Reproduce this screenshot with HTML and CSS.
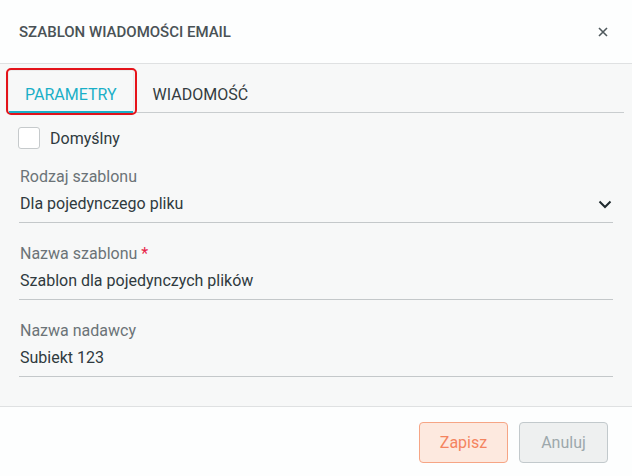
FILE: index.html
```html
<!DOCTYPE html>
<html lang="pl">
<head>
  <meta charset="UTF-8" />
  <title>Szablon wiadomości email</title>
  <meta name="viewport" content="width=device-width, initial-scale=1" />
  <link rel="stylesheet" href="styles.css">
</head>
<body>
  <div class="dialog">
    <div class="dialog-header">
      <h2 class="dialog-title">Szablon wiadomości email</h2>
      <button class="close" title="Zamknij">
        <svg width="10" height="10" viewBox="0 0 10 10"><path d="M1 1 L9 9 M9 1 L1 9" stroke="#50595d" stroke-width="1.6" fill="none"/></svg>
      </button>
    </div>

    <div class="dialog-body">
      <div class="tabs">
        <span class="highlight"><span class="tab active">Parametry</span></span>
        <span class="tab">Wiadomość</span>
      </div>

      <div class="fields">
        <label class="check">
          <span class="box"></span>
          Domyślny
        </label>

        <div class="field">
          <div class="field-label">Rodzaj szablonu</div>
          <div class="field-value select">
            <span>Dla pojedynczego pliku</span>
            <svg width="14" height="9" viewBox="0 0 14 9"><path d="M1.5 1.5 L7 7 L12.5 1.5" stroke="#1f2a2e" stroke-width="2" fill="none"/></svg>
          </div>
        </div>

        <div class="field">
          <div class="field-label">Nazwa szablonu<span class="req">*</span></div>
          <div class="field-value">Szablon dla pojedynczych plików</div>
        </div>

        <div class="field">
          <div class="field-label">Nazwa nadawcy</div>
          <div class="field-value">Subiekt 123</div>
        </div>
      </div>
    </div>

    <div class="dialog-footer">
      <button class="btn btn-save">Zapisz</button>
      <button class="btn btn-cancel">Anuluj</button>
    </div>
  </div>
</body>
</html>
```

FILE: styles.css
```css
body { margin: 0; font-family: Roboto, "Liberation Sans", sans-serif; background: #fdfefe; color: #2f3a3e; }
.dialog { width: 632px; height: 476px; display: flex; flex-direction: column; }

.dialog-header {
  height: 63px; padding: 0 21px 0 19px; display: flex; align-items: center; justify-content: space-between;
  border-bottom: 1px solid #dfe1e2; background: #fdfefe;
}
.dialog-title { margin: 0; font-size: 15px; font-weight: 500; text-transform: uppercase; color: #4a5256; }
.close { border: none; background: none; padding: 0; width: 16px; height: 16px; display: flex; align-items: center; justify-content: center; cursor: pointer; }

.dialog-body { flex: 1; background: #f7f8f8; border-bottom: 1px solid #dfe1e2; }

.tabs { margin: 4px 8px 0 8px; display: flex; align-items: flex-end; border-bottom: 1px solid #c9cdcf; }
.highlight { border: 2px solid #e8141b; border-radius: 5px; padding: 1px 2px 0 1px; margin: 0 0 -3px -2px; display: flex; }
.tab {
  height: 42px; padding: 6px 16px 0 16px; box-sizing: border-box; display: flex; align-items: center; font-size: 16px;
  text-transform: uppercase; color: #333c40; border-bottom: 2px solid transparent; margin-bottom: -1px;
}
.tab.active { color: #1aafc7; border-bottom-color: #1aafc7; box-shadow: 0 0 4px rgba(0,0,0,0.12); margin-bottom: 0; }

.fields { padding: 14px 19px 0 19px; }
.check { display: flex; align-items: center; gap: 10px; font-size: 16px; color: #2f3a3e; margin-left: -1px; }
.box { width: 20px; height: 20px; border: 1px solid #c6cacc; border-radius: 3px; background: #fff; }

.field { border-bottom: 1px solid #c4c8ca; padding-bottom: 8px; margin-top: 18px; }
.field + .field { margin-top: 21px; }
.field-label { font-size: 16px; line-height: 20px; color: #6b7377; padding-left: 1px; }
.req { color: #e8254a; margin-left: 4px; }
.field-value { font-size: 16px; line-height: 20px; margin-top: 7px; color: #2f3a3e; padding-left: 1px; }
.select { display: flex; justify-content: space-between; align-items: center; }
.select svg { margin-right: 1px; }

.dialog-footer { height: 69px; display: flex; justify-content: flex-end; align-items: flex-start; gap: 11px; padding: 15px 24px 0 0; box-sizing: border-box; }
.btn { width: 89px; height: 41px; border-radius: 4px; font-family: inherit; font-size: 16px; cursor: pointer; }
.btn-save { background: #fde9df; border: 1px solid #f6a585; color: #f4845f; }
.btn-cancel { background: #eef0f0; border: 1px solid #c2c9cc; color: #9da8ac; }
```
